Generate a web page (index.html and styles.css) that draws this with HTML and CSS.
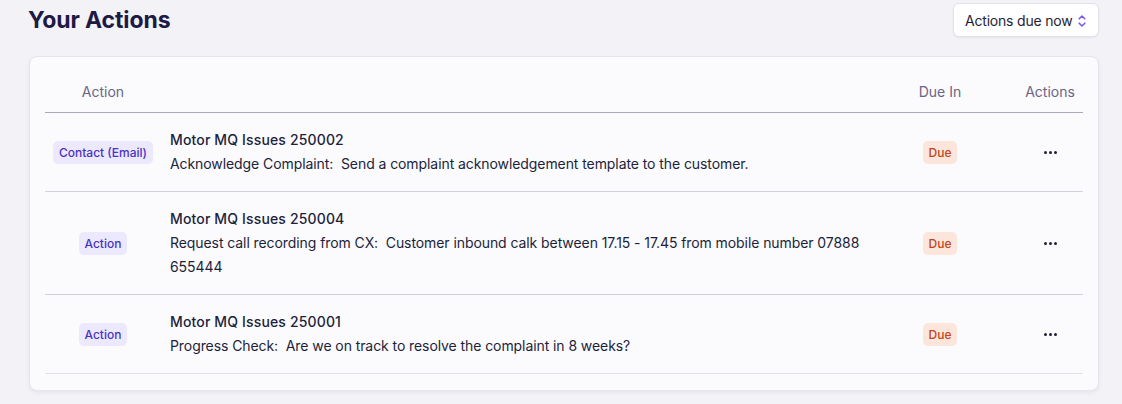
FILE: index.html
```html
<!DOCTYPE html>
<html lang="en">
<head>
<meta charset="utf-8">
<title>Your Actions</title>
<link rel="stylesheet" href="styles.css">
</head>
<body>
<div class="topbar">
  <h1 class="title">Your Actions</h1>
  <button class="select">
    <span>Actions due now</span>
    <svg class="chev" width="10" height="16" viewBox="0 0 10 16" fill="none" stroke="currentColor" stroke-width="1.6" stroke-linecap="round" stroke-linejoin="round"><path d="M2.2 5.8 L5 3 L7.8 5.8"/><path d="M2.2 10.2 L5 13 L7.8 10.2"/></svg>
  </button>
</div>
<div class="card">
  <div class="table">
    <div class="row head">
      <div class="c1">Action</div>
      <div class="c2"></div>
      <div class="c3">Due In</div>
      <div class="c4">Actions</div>
    </div>
    <div class="row">
      <div class="c1"><span class="badge type">Contact (Email)</span></div>
      <div class="c2"><div class="name">Motor MQ Issues 250002</div><div class="desc">Acknowledge Complaint:&nbsp; Send a complaint acknowledgement template to the customer.</div></div>
      <div class="c3"><span class="badge due">Due</span></div>
      <div class="c4"><span class="dots"><i></i><i></i><i></i></span></div>
    </div>
    <div class="row">
      <div class="c1"><span class="badge type">Action</span></div>
      <div class="c2"><div class="name">Motor MQ Issues 250004</div><div class="desc">Request call recording from CX:&nbsp; Customer inbound calk between 17.15 - 17.45 from mobile number 07888 655444</div></div>
      <div class="c3"><span class="badge due">Due</span></div>
      <div class="c4"><span class="dots"><i></i><i></i><i></i></span></div>
    </div>
    <div class="row last">
      <div class="c1"><span class="badge type">Action</span></div>
      <div class="c2"><div class="name">Motor MQ Issues 250001</div><div class="desc">Progress Check:&nbsp; Are we on track to resolve the complaint in 8 weeks?</div></div>
      <div class="c3"><span class="badge due">Due</span></div>
      <div class="c4"><span class="dots"><i></i><i></i><i></i></span></div>
    </div>
  </div>
</div>
</body>
</html>
```
FILE: styles.css
```css
* { box-sizing: border-box; }
html, body { margin: 0; padding: 0; }
body {
  background: #f3f2f6;
  font-family: Inter, "Noto Sans", sans-serif;
  color: #1f1d36;
  width: 1122px;
  height: 404px;
  overflow: hidden;
}
.topbar {
  display: flex;
  align-items: center;
  justify-content: space-between;
  padding: 3px 23px 0 28px;
  height: 37px;
}
.title {
  margin: 0;
  font-size: 23px;
  font-weight: 700;
  color: #1d1a45;
  letter-spacing: -0.1px;
  line-height: 34px;
}
.select {
  height: 34px;
  width: 146px;
  background: #ffffff;
  border: 1px solid #e3e1ea;
  border-radius: 6px;
  box-shadow: 0 1px 2px rgba(30, 20, 60, 0.06);
  display: flex;
  align-items: center;
  justify-content: space-between;
  padding: 0 11px 0 11px;
  font-family: Inter, "Noto Sans", sans-serif;
  font-size: 14px;
  letter-spacing: -0.2px;
  color: #1f1d36;
}
.chev { color: #7a5af0; margin-top: 1px; }
.card {
  margin: 19px 23px 0 29px;
  background: #fbfafd;
  border: 1px solid #e6e4ec;
  border-radius: 8px;
  box-shadow: 0 2px 4px rgba(40, 30, 80, 0.06);
  padding: 15px 15px 16px 15px;
}
.row {
  display: grid;
  grid-template-columns: 116px 1fr 110px 88px;
  align-items: center;
  border-bottom: 1px solid #d3d0dc;
  padding: 15px 0;
  font-size: 14px;
  line-height: 24px;
}
.row.head {
  padding: 0;
  height: 41px;
  color: #6a6684;
  border-bottom-color: #aca6bf;
}
.row.last { border-bottom-color: #e3e1e9; }
.c1 { text-align: center; display: flex; justify-content: center; }
.c2 { padding-left: 9px; }
.c3 { display: flex; justify-content: center; }
.c4 { display: flex; justify-content: center; padding-left: 22px; }
.name { font-weight: 500; color: #211f3a; letter-spacing: 0.15px; }
.desc { color: #211f3a; letter-spacing: -0.08px; }
.badge {
  display: inline-block;
  font-size: 12px;
  font-weight: 500;
  line-height: 23px;
  height: 23px;
  padding: 0 6px;
  border-radius: 5px;
}
.badge.type { background: #ece8fd; color: #4a33c2; }
.badge.due { background: #fce6dc; color: #c2451c; }
.dots { display: flex; gap: 2px; align-items: center; height: 24px; }
.dots i { width: 3px; height: 3px; background: #211f3a; border-radius: 50%; display: block; }
```
